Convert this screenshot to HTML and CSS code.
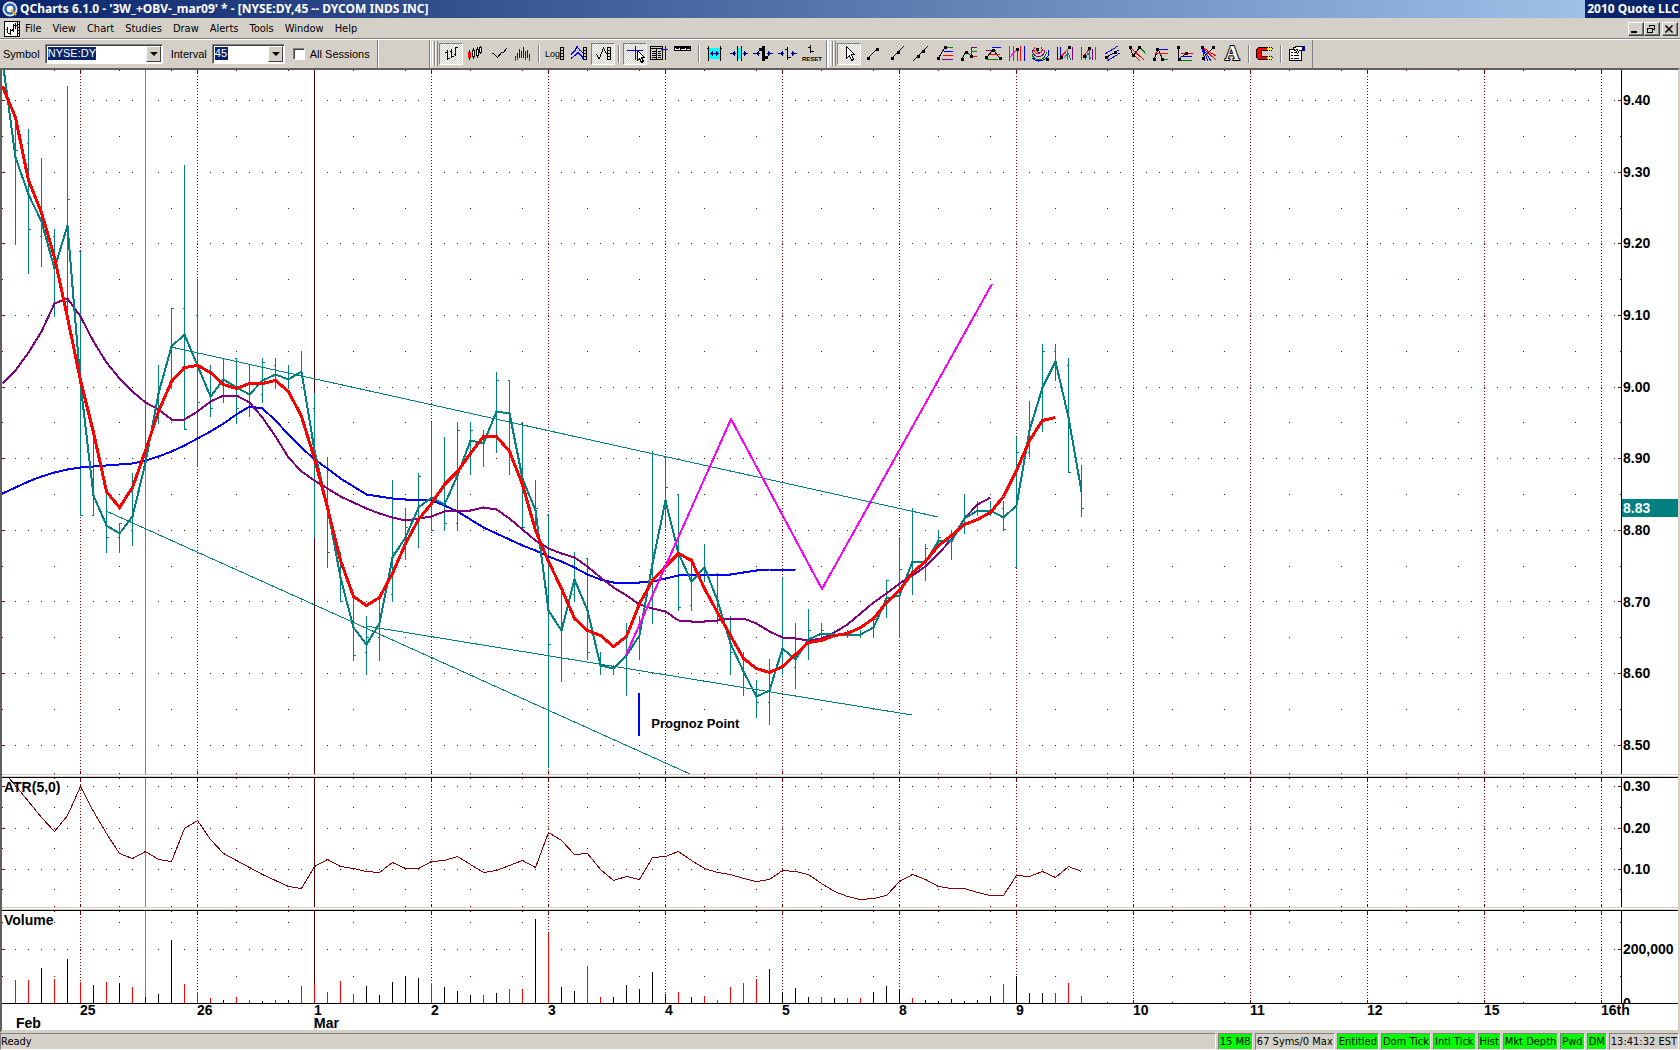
FILE: index.html
```html
<!DOCTYPE html>
<html lang="en">
<head>
    <meta charset="UTF-8">
    <meta name="viewport" content="width=device-width, initial-scale=1.0">
    <title>QCharts 6.1.0</title>
    <link rel="stylesheet" href="styles.css">
</head>
<body>
    <!-- Title bar -->
    <header class="title-bar">
        <svg class="app-icon" viewBox="0 0 16 16" width="16" height="16">
            <circle cx="8" cy="8" r="7.5" fill="#dfe8f4"/>
            <circle cx="8" cy="8" r="4.5" fill="#fff" stroke="#2f62b0" stroke-width="2.5"/>
            <path d="M9 9l5 5" stroke="#e0a020" stroke-width="2"/>
        </svg>
        <h1>QCharts 6.1.0 - '3W_+OBV-_mar09' * - [NYSE:DY,45 -- DYCOM INDS INC]</h1>
        <span class="title-owner">2010 Quote LLC</span>
    </header>

    <!-- Menu -->
    <nav class="menu-bar">
        <svg class="doc-icon" viewBox="0 0 16 16" width="16" height="16" shape-rendering="crispEdges">
            <rect width="16" height="16" fill="#000"/>
            <rect x="1" y="1" width="12" height="14" fill="#fff"/>
            <path d="M3.5 6v6M2 8.5h2M6.5 8v6M4 12.5h2M7 9.5h2M9.5 3v8M8 8.5h1M11.5 2v6M10 4.5h3" stroke="#000"/>
            <path d="M14.5 1v14" stroke="#fff" stroke-dasharray="2 1"/>
        </svg>
        <a href="#">File</a>
        <a href="#">View</a>
        <a href="#">Chart</a>
        <a href="#">Studies</a>
        <a href="#">Draw</a>
        <a href="#">Alerts</a>
        <a href="#">Tools</a>
        <a href="#">Window</a>
        <a href="#">Help</a>
        <div class="window-buttons">
            <button aria-label="Minimize"><svg viewBox="0 0 12 10" width="12" height="10" shape-rendering="crispEdges"><path d="M2 7h6v2H2z"/></svg></button>
            <button aria-label="Restore"><svg viewBox="0 0 12 10" width="12" height="10" shape-rendering="crispEdges"><path d="M4.5 3V1.5h5v4H8M4 1h6M2.5 4.5h5v4h-5zM2 4h6" fill="none" stroke="#000"/></svg></button>
            <button class="close" aria-label="Close"><svg viewBox="0 0 12 10" width="12" height="10"><path d="M2.500 1.500l7 7M9.500 1.500l-7 7" stroke="#000" stroke-width="1.500"/></svg></button>
        </div>
    </nav>

    <!-- Toolbars -->
    <div class="toolbars">
        <form class="symbol-bar">
            <label for="symbol">Symbol</label>
            <div class="combo">
                <select id="symbol" class="symbol-select"><option>NYSE:DY</option></select>
                <span class="combo-arrow"></span>
            </div>
            <label for="interval">Interval</label>
            <div class="combo">
                <select id="interval" class="interval-select"><option>45</option></select>
                <span class="combo-arrow"></span>
            </div>
            <input type="checkbox" id="sessions">
            <label for="sessions">All Sessions</label>
        </form>

        <div class="tool-bar">
            <button class="pressed" aria-label="Bars"><svg viewBox="0 0 24 21"><path d="M8.500 7v10M6 9.500h2M9 15.500h2M12.500 6v9M11 8.500h1M13 13.500h2M16.500 4v9M15 11.500h1M17 4.500h2"/></svg></button>
            <button aria-label="Candles"><svg viewBox="0 0 24 21"><path d="M6.500 7v10M10.500 5v11M14.500 4v11M17.500 3v8"/><path class="w" d="M9.500 7.500h2v6h-2zM13.500 6.500h2v6h-2zM16.500 4.500h2v5h-2z"/><rect x="5" y="9" width="3" height="6" fill="red"/></svg></button>
            <button aria-label="Line"><svg viewBox="0 0 24 21"><path d="M4.500 10.500h2l4 4 4-5h2l3-4"/></svg></button>
            <button aria-label="Histogram"><svg viewBox="0 0 24 21"><path class="b" d="M4.500 13v2M6.500 10v5M8.500 6v9M10.500 8v7M12.500 4v11M14.500 8v7M16.500 7v8M18.500 11v4"/><path class="r" d="M4.500 15v3M6.500 15v2M14.500 15v2M18.500 15v3"/></svg></button>
            <i></i>
            <button aria-label="Log scale"><svg viewBox="0 0 24 21"><text x="2" y="14" class="log">Log</text><path d="M17.500 4.500h3v12h-3zM18 7.500h2M18 10.500h2M18 13.500h2"/></svg></button>
            <button aria-label="Scale all"><svg viewBox="0 0 24 21"><path class="b" d="M4 11.500l4-4 2-4 3 4 3 2M4 15.500l4-3 3-3 4 4 1 2"/><path d="M16.500 4.500h3v12h-3zM17 7.500h2M17 10.500h2M17 13.500h2"/></svg></button>
            <button class="pressed" aria-label="Scale price"><svg viewBox="0 0 24 21"><path d="M5.500 11l2 4h1l4-10 3 6M19.500 4.500h-3v12h3zM17 7.500h2M17 10.500h2M17 13.500h2"/></svg></button>
            <i></i>
            <button class="pressed" aria-label="Crosshair"><svg viewBox="0 0 24 21"><path class="b" d="M4 7.500h16M12.500 3v14"/><path class="w" d="M14.500 7.500v10l2-2 2 4 2-1-2-4h3z"/></svg></button>
            <button aria-label="Data window"><svg viewBox="0 0 24 21"><path d="M3.500 3.500h12v13h-12zM3 5.500h13M5 8.500h4M5 10.500h4M5 12.500h4M5 14.500h4M11 8.500h3M11 10.500h3M11 12.500h3M11 14.500h3M9.500 6v10"/><path class="b" d="M18.500 3v14M14 6.500h7"/></svg></button>
            <button aria-label="Cursor line"><svg viewBox="0 0 24 21"><path class="w" d="M3.500 3.500h16v4h-16z"/><path d="M3 4.500h17M5 5.500h3M10 5.500h4M16 5.500h3M9.500 4v3M15.500 4v3"/></svg></button>
            <i></i>
            <button aria-label="Fit"><svg viewBox="0 0 24 21"><rect x="6" y="5" width="11" height="11" fill="#0ff"/><path d="M5.500 3v15M17.500 3v15M4 5.500h1M18 5.500h1"/><path class="n" d="M7 10.500h9M9.500 8v5M13.500 8v5M8.500 9v3M14.500 9v3"/></svg></button>
            <button aria-label="Compress"><svg viewBox="0 0 24 21"><rect x="11" y="5" width="3" height="11" fill="#0ff"/><path d="M10.500 3v15M14.500 3v15"/><path class="n" d="M3 10.500h6M16 10.500h5M7.500 8v5M17.500 8v5M6.500 9v3M18.500 9v3"/></svg></button>
            <button aria-label="Thicker"><svg viewBox="0 0 24 21"><path class="k" d="M11 3h3v15h-3zM8 5h3v3H8zM14 13h3v3h-3z"/><path class="n" d="M2 10.500h7M16 10.500h6M7.500 8v5M17.500 8v5M6.500 9v3M18.500 9v3"/></svg></button>
            <button aria-label="Thinner"><svg viewBox="0 0 24 21"><path d="M12.500 4v13M10 6.500h2M13 14.500h3"/><path class="n" d="M3 10.500h6M16 10.500h6M7.500 8v5M17.500 8v5M6.500 9v3M18.500 9v3"/></svg></button>
            <button aria-label="Reset"><svg viewBox="0 0 24 21"><path d="M11.500 2v8M9 4.500h2M12 8.500h3"/><text x="3" y="18" class="reset">RESET</text></svg></button>
        </div>

        <div class="tool-bar">
            <button class="pressed" aria-label="Select"><svg viewBox="0 0 24 21"><path class="w" d="M9.500 3.500v12l3-3 2 5 2-1-2-5h3z"/></svg></button>
            <button aria-label="Segment"><svg viewBox="0 0 24 21"><path d="M7 15l9-9"/><path class="s" d="M6 14h3v3H6zM15 5h3v3h-3z"/></svg></button>
            <button aria-label="Ray"><svg viewBox="0 0 24 21"><path d="M7 15l12-12"/><path class="s" d="M6 14h3v3H6zM12 8h3v3h-3z"/></svg></button>
            <button aria-label="Line"><svg viewBox="0 0 24 21"><path d="M4 18l15-15"/><path class="s" d="M8 12h3v3H8zM13 7h3v3h-3z"/></svg></button>
            <button aria-label="Retracement"><svg viewBox="0 0 24 21"><path d="M5 16l7-12"/><path class="g" d="M13 4.500h7"/><path class="b" d="M11 8.500h9"/><path class="r" d="M10 12.500h10"/><path class="p" d="M9 16.500h11"/><path class="s" d="M4 14h3v3H4zM11 3h3v3h-3z"/></svg></button>
            <button aria-label="Extension"><svg viewBox="0 0 24 21"><path d="M5 16l4-8 5 5"/><path class="p" d="M14.500 4v10M14 4.500h6"/><path class="g" d="M14 8.500h6"/><path class="r" d="M14 13.500h6"/><path class="s" d="M4 15h3v3H4zM8 8h3v3H8zM13 12h3v3h-3z"/></svg></button>
            <button aria-label="Projection"><svg viewBox="0 0 24 21"><path d="M5 15l7-8 7 8"/><path class="b" d="M11 4.500h9"/><path class="p" d="M5 7.500h10"/><path class="r" d="M8 11.500h11"/><path class="g" d="M5 16.500h12"/><path class="s" d="M11 6h3v3h-3zM4 13h3v3H4zM18 14h3v3h-3z"/></svg></button>
            <button aria-label="Time lines"><svg viewBox="0 0 24 21"><path class="t" d="M4.500 3v15M8.500 3v15"/><path class="m" d="M5 14l7-8"/><path class="r" d="M12.500 7v11M15.500 3v15"/><path class="b" d="M19.500 3v15"/><path class="s" d="M11 5h3v3h-3z"/></svg></button>
            <button aria-label="Arcs"><svg viewBox="0 0 24 21"><g class="arc"><path class="r" d="M6 4a4 4 0 1 0 6 0"/><path class="p" d="M3 7a6 6 0 0 0 13 0"/><path class="g" d="M3 11a7 7 0 0 0 14-3"/><path class="b" d="M3 15a10 10 0 0 0 17-8M8 8a2 2 0 0 0 3 1"/></g><path class="s" d="M7 5h3v3H7zM17 15h3v3h-3z"/></svg></button>
            <button aria-label="Cycles"><svg viewBox="0 0 24 21"><path class="b" d="M4.500 4v13M7.500 4v13"/><path class="r" d="M5 17l12-13"/><path class="t" d="M11 15l4-5 3 7M14.500 8v9"/><path class="p" d="M19.500 4v13"/><path class="s" d="M7 13h3v3H7zM15 3h3v3h-3z"/></svg></button>
            <button aria-label="Fan time"><svg viewBox="0 0 24 21"><path class="g" d="M4.500 4v13"/><path class="r" d="M7 13l6-8"/><path class="t" d="M8 17l3-7 3 6M12.500 6v11M18.500 4v13"/><path class="p" d="M15.500 6v11"/><path class="s" d="M6 12h3v3H6zM11 4h3v3h-3z"/></svg></button>
            <button aria-label="Channel"><svg viewBox="0 0 24 21"><path class="b" d="M4 11l13-8M6 18l13-8"/><path d="M4 15l14-8"/><path class="s" d="M4 13h3v3H4zM13 8h3v3h-3z"/></svg></button>
            <button aria-label="Pitchfork"><svg viewBox="0 0 24 21"><path class="r" d="M5 4l14 13M8 11l7 7"/><path d="M5 4l3 9 7-9"/><path class="g" d="M15 4l6 7"/><path class="s" d="M4 3h3v3H4zM13 3h3v3h-3zM7 11h3v3H7z"/></svg></button>
            <button aria-label="Levels"><svg viewBox="0 0 24 21"><path d="M5 17l4-11 5 11"/><path class="b" d="M10 6.500h9"/><path class="r" d="M6 10.500h13"/><path class="g" d="M13 16.500h6"/><path class="s" d="M7 5h3v3H7zM4 15h3v3H4zM12 15h3v3h-3z"/></svg></button>
            <button aria-label="Channel levels"><svg viewBox="0 0 24 21"><path d="M5.500 4v12l7-5"/><path class="r" d="M8 10.500h12"/><path class="b" d="M8 13.500h11"/><path class="g" d="M7 17.500h12"/><path class="s" d="M4 3h3v3H4zM12 9h3v3h-3zM5 15h3v3H5z"/></svg></button>
            <button aria-label="Fan"><svg viewBox="0 0 24 21"><path class="b" d="M5 4l3 14M5 4l9 14M5 4l6 14"/><path class="r" d="M5 4l14 13M5 4l14 9"/><path d="M6 15l11-11"/><path class="s" d="M4 3h3v3H4zM15 3h3v3h-3zM5 14h3v3H5z"/></svg></button>
            <button aria-label="Text"><svg viewBox="0 0 24 21"><text x="4" y="17" class="letter">A</text></svg></button>
            <i></i>
            <button aria-label="Magnet"><svg viewBox="0 0 24 21"><path class="k" d="M5 4h10v4H9v5h6v4H5l-2-2V6z"/><path d="M5 5h9v2H8v7h6v2H5l-1-2V7z" fill="red" stroke="none"/><path d="M14 5h5v2h-5zM14 14h5v2h-5z" fill="#ff0" stroke="none"/><path d="M14 4.500h5M14 7.500h5M14 13.500h5M14 16.500h5M19.500 5v2M19.500 14v2" stroke-dasharray="1 1"/></svg></button>
            <i></i>
            <button aria-label="Properties"><svg viewBox="0 0 24 21"><path class="w" d="M4.500 6.500h12v11h-12z"/><path d="M6 9.500h2M9 9.500h5M6 12.500h2M9 12.500h5M6 15.500h2M9 15.500h5"/><path class="w" d="M8.500 4.500l4-1h5v4h-3l-2 3-1-1 1-3-3 1z"/><path d="M17 3h3v5h-3z" fill="navy" stroke="none"/></svg></button>
        </div>
    </div>

    <!-- Chart window -->
    <main class="chart-window">
        <section class="panel price-panel">
            <div class="plot">
                <svg id="price" viewBox="2 70 1619 704" preserveAspectRatio="none"></svg>
                <span class="note">Prognoz Point</span>
            </div>
            <div class="scale">
                <span>9.40</span>
                <span>9.30</span>
                <span>9.20</span>
                <span>9.10</span>
                <span>9.00</span>
                <span>8.90</span>
                <span>8.80</span>
                <span>8.70</span>
                <span>8.60</span>
                <span>8.50</span>
                <strong class="last-price">8.83</strong>
            </div>
        </section>

        <section class="panel atr-panel">
            <div class="plot">
                <svg id="atr" viewBox="2 778 1619 129" preserveAspectRatio="none"></svg>
                <h2>ATR(5,0)</h2>
            </div>
            <div class="scale">
                <span>0.30</span>
                <span>0.20</span>
                <span>0.10</span>
            </div>
        </section>

        <section class="panel volume-panel">
            <div class="plot">
                <svg id="volume" viewBox="2 911 1619 92" preserveAspectRatio="none"></svg>
                <h2>Volume</h2>
            </div>
            <div class="scale">
                <span>200,000</span>
                <span>0</span>
            </div>
        </section>

        <div class="date-axis">
            <div class="month"><br>Feb</div>
            <div>25</div>
            <div>26</div>
            <div class="month-start">1<br>Mar</div>
            <div>2</div>
            <div>3</div>
            <div>4</div>
            <div>5</div>
            <div>8</div>
            <div>9</div>
            <div>10</div>
            <div>11</div>
            <div>12</div>
            <div>15</div>
            <div>16th</div>
        </div>
    </main>

    <!-- Status bar -->
    <footer class="status-bar">
        <span class="ready">Ready</span>
        <span class="on">15 MB</span>
        <span>67 Syms/0 Max</span>
        <span class="on">Entitled</span>
        <span class="on">Dom Tick</span>
        <span class="on">Intl Tick</span>
        <span class="on">Hist</span>
        <span class="on">Mkt Depth</span>
        <span class="on">Pwd</span>
        <span class="on">DM</span>
        <span>13:41:32 EST</span>
    </footer>

    <script src="script.js"></script>
</body>
</html>
```
FILE: styles.css
```css
* {
    box-sizing: border-box;
}

body {
    margin: 0;
    height: 100vh;
    display: flex;
    flex-direction: column;
    overflow: hidden;
    background-color: #d4d0c8;
    color: #000;
    font-family: "DejaVu Sans Condensed", "DejaVu Sans", sans-serif;
    font-size: 11px;
}

/* Title bar */
.title-bar {
    display: flex;
    align-items: center;
    height: 18px;
    padding-left: 2px;
    gap: 2px;
    background: linear-gradient(90deg, #0a246a, #a6caf0);
    color: #fff;
}

.title-bar h1,
.title-owner {
    margin: 0;
    font-family: "Noto Sans", sans-serif;
    font-size: 12px;
    font-weight: bold;
    line-height: 18px;
    white-space: nowrap;
}

.title-owner {
    margin-left: auto;
    padding: 0 1px 0 2px;
    background-color: #0a246a;
}

/* Menu */
.menu-bar {
    display: flex;
    align-items: center;
    height: 22px;
    padding-left: 4px;
    border-bottom: 1px solid #fff;
    box-shadow: inset 0 -1px #808080;
}

.menu-bar a {
    margin-left: 11px;
    color: #000;
    text-decoration: none;
}

.menu-bar .doc-icon + a {
    margin-left: 5px;
}

.window-buttons {
    display: flex;
    margin-left: auto;
    padding-right: 2px;
}

.window-buttons button {
    width: 16px;
    height: 14px;
    padding: 0;
    border: 1px solid;
    border-color: #fff #404040 #404040 #fff;
    box-shadow: inset -1px -1px #808080;
    background-color: #d4d0c8;
}

.window-buttons svg {
    display: block;
}

.window-buttons .close {
    margin-left: 2px;
}

/* Toolbars */
.toolbars {
    display: flex;
    align-items: stretch;
    height: 28px;
}

.symbol-bar {
    display: flex;
    align-items: center;
    width: 378px;
    padding-left: 3px;
    border-right: 1px solid #808080;
    box-shadow: 1px 0 #fff;
    margin-right: 51px;
    font-family: "Liberation Sans", Arial, sans-serif;
    font-size: 11px;
    white-space: nowrap;
}

.combo {
    position: relative;
    margin: 0 8px 0 5px;
}

.combo select {
    appearance: none;
    display: block;
    height: 20px;
    padding: 0 0 2px 2px;
    border: 1px solid;
    border-color: #808080 #fff #fff #808080;
    box-shadow: inset 1px 1px #404040;
    border-radius: 0;
    background: linear-gradient(#0a246a, #0a246a) 2px 2px / 48px 13px no-repeat #fff;
    color: #fff;
    font-family: "Liberation Sans", Arial, sans-serif;
    font-size: 11px;
}

.combo .symbol-select {
    width: 118px;
}

.combo .interval-select {
    width: 73px;
    background-size: 13px 13px;
}

.combo-arrow {
    position: absolute;
    top: 2px;
    right: 2px;
    width: 15px;
    height: 16px;
    border: 1px solid;
    border-color: #fff #404040 #404040 #fff;
    background-color: #d4d0c8;
    pointer-events: none;
}

.combo-arrow::after {
    content: "";
    display: block;
    margin: 5px 3px;
    border: 4px solid transparent;
    border-top-color: #000;
    border-bottom: 0;
    width: 0;
}

.symbol-bar input {
    appearance: none;
    width: 12px;
    height: 12px;
    margin: 0 5px 0 0;
    border: 1px solid;
    border-color: #808080 #fff #fff #808080;
    box-shadow: inset 1px 1px #404040;
    background-color: #fff;
}

.symbol-bar input:checked {
    background-color: #0a246a;
}

.tool-bar {
    display: flex;
    align-items: center;
    padding: 0 3px 1px 0;
    border-left: 1px solid #808080;
    border-right: 1px solid #808080;
    box-shadow: inset 1px 0 #fff;
}

.tool-bar + .tool-bar {
    border-left-color: #fff;
}

/* Gripper */
.tool-bar::before {
    content: "";
    width: 7px;
    height: 25px;
    margin: 0 0 0 2px;
    background: linear-gradient(90deg, #fff 1px, #d4d0c8 1px, #d4d0c8 2px, #808080 2px, #808080 3px, #fff 3px, #fff 4px, #d4d0c8 4px, #d4d0c8 5px, #808080 5px, #808080 6px, #d4d0c8 6px);
}

.tool-bar button {
    width: 24px;
    height: 22px;
    padding: 0;
    border: 1px solid transparent;
    background-color: transparent;
}

.tool-bar .pressed {
    border-color: #808080 #fff #fff #808080;
    background: repeating-conic-gradient(#fff 0 25%, #d4d0c8 0 50%) 0 0 / 2px 2px;
}

.tool-bar i {
    width: 2px;
    height: 18px;
    margin: 0 3px;
    border-left: 1px solid #808080;
    border-right: 1px solid #fff;
}

.tool-bar svg {
    display: block;
    width: 24px;
    height: 21px;
    margin: -1px;
    fill: none;
    stroke: #000;
    shape-rendering: crispEdges;
}

.tool-bar .w { fill: #fff; }
.tool-bar .s { fill: #000; stroke: none; }
.tool-bar .k { fill: #000; stroke: none; }
.tool-bar .r { stroke: #f00; }
.tool-bar .g { stroke: #008000; }
.tool-bar .b { stroke: #00f; }
.tool-bar .n { stroke: #000080; }
.tool-bar .p { stroke: #800080; }
.tool-bar .t { stroke: #008080; }
.tool-bar .m { stroke: #f0f; }

.tool-bar rect {
    stroke: none;
}

.tool-bar text {
    fill: #000;
    stroke: none;
    font-family: "Liberation Sans", Arial, sans-serif;
}

.tool-bar .log {
    font-size: 9px;
}

.tool-bar .reset {
    font-size: 6px;
    font-weight: bold;
}

.tool-bar .letter {
    fill: #fff;
    stroke: #000;
    stroke-width: 2px;
    paint-order: stroke;
    font-family: "Liberation Serif", serif;
    font-size: 20px;
    font-weight: bold;
}

/* Chart window */
.chart-window {
    flex: 1;
    min-height: 0;
    display: flex;
    flex-direction: column;
    border: solid;
    border-width: 2px 2px 3px 2px;
    border-color: #606060 #d4d0c8 #d4d0c8 #606060;
    background-color: #fff;
    font-family: "Liberation Sans", Arial, sans-serif;
    font-size: 14px;
    font-weight: bold;
}

.panel {
    display: flex;
    min-height: 0;
}

.price-panel {
    flex: 704 1 0;
}

.atr-panel {
    flex: 129 1 0;
}

.volume-panel {
    flex: 92 1 0;
}

/* Splitter above each study */
.atr-panel,
.volume-panel {
    border-top: 1px solid #000;
    margin-top: 3px;
    box-shadow: 0 -1px #d4d0c8, 0 -2px #fff, 0 -3px #d4d0c8;
}

.plot {
    position: relative;
    flex: 1;
    min-width: 0;
}

.plot svg {
    position: absolute;
    width: 100%;
    height: 100%;
    fill: none;
    shape-rendering: crispEdges;
}

.plot h2 {
    position: relative;
    margin: 0;
    padding: 1px 0 0 2px;
    font-size: 14px;
    line-height: 16px;
}

.note {
    position: absolute;
    left: 40.1%;
    top: 91.8%;
    font-size: 13px;
    line-height: 16px;
}

.scale {
    position: relative;
    width: 57px;
    display: flex;
    flex-direction: column;
    justify-content: space-between;
    padding-left: 1px;
    border-left: 1px solid #000;
    line-height: 16px;
    overflow: hidden;
}

.price-panel .scale {
    padding-top: 22px;
    padding-bottom: 21px;
}

.atr-panel .scale {
    padding-bottom: 30px;
}

.volume-panel .scale {
    padding-top: 30px;
}

.volume-panel .scale span:last-child {
    margin-bottom: -8px;
}

.last-price {
    position: absolute;
    top: 61%;
    left: 0;
    right: 0;
    padding-left: 1px;
    background-color: #008080;
    color: #fff;
    line-height: 18px;
}

.date-axis {
    display: grid;
    grid-template-columns: 78fr repeat(13, 117fr) minmax(0, 20fr);
    height: 27px;
    padding-right: 57px;
    border-top: 1px solid #000;
    line-height: 13px;
    white-space: nowrap;
}

.date-axis .month {
    padding-left: 14px;
}

.date-axis .month-start {
    background: linear-gradient(#c0c0c0, #c0c0c0) 0 13px / 1px 13px no-repeat;
}

/* Status bar */
.status-bar {
    display: flex;
    align-items: stretch;
    gap: 2px;
    height: 17px;
    padding-right: 1px;
    white-space: nowrap;
}

.status-bar span {
    padding: 0 1px;
    border: 1px solid;
    border-color: #808080 #fff #fff #808080;
    line-height: 15px;
}

.status-bar .ready {
    flex: 1;
    padding-left: 0;
}

.status-bar .on {
    background-color: #0f0;
}
```
FILE: script.js
```js
const NS = 'http://www.w3.org/2000/svg';
const FIRST_X = 2;
const BAR_STEP = 13;
const DAY_BARS = 9;
const RIGHT = 1621;

// [high, low, open, close] in chart units, 0 = no tick
const bars = [
    [117,244,0,150],[129,273,143,229],[158,266,236,0],[229,316,236,0],[86,309,301,199],[251,515,251,515],
    [428,515,515,0],[494,552,0,537],[523,552,537,523],[473,545,530,0],[400,458,0,0],[365,423,0,0],
    [308,388,0,308],[165,429,308,429],[279,466,315,402],[365,416,0,408],[358,402,0,0],[358,423,358,408],
    [365,416,0,407],[358,402,394,362],[358,388,365,0],[365,388,0,0],[351,376,0,0],[393,537,408,0],
    [457,567,0,552],[552,601,0,601],[596,660,0,655],[616,674,652,637],[597,660,637,0],[480,601,594,552],
    [508,559,0,527],[473,547,0,476],[422,530,0,530],[437,530,0,523],[422,530,523,430],[422,474,0,430],
    [430,466,0,0],[372,452,0,380],[380,474,380,0],[423,527,423,527],[480,530,0,508],[515,767,515,644],
    [587,681,0,0],[552,601,594,567],[558,659,558,652],[652,674,0,0],[665,674,0,0],[623,695,0,0],
    [616,659,0,0],[451,623,0,552],[457,527,457,487],[494,610,494,607],[558,610,605,0],[544,581,0,0],
    [573,623,0,0],[616,674,0,652],[652,695,0,0],[680,717,0,702],[659,724,702,0],[577,674,0,0],
    [623,688,667,0],[609,659,0,630],[623,637,0,630],[630,637,0,0],[630,637,0,0],[630,637,0,0],
    [616,637,0,619],[580,617,0,580],[537,637,0,569],[508,594,0,0],[544,580,0,548],[530,547,0,537],
    [530,559,0,0],[494,533,0,515],[501,515,0,0],[501,515,0,0],[501,529,508,529],[437,567,567,452],
    [401,456,452,422],[344,431,0,351],[344,380,351,0],[358,472,365,472],[465,516,0,508]
];

const fast = [60,157,194,221,268,225,383,495,525,533,516,462,393,346,334,365,396,379,387,394,380,374,379,371,450,
    507,577,627,644,623,557,537,507,497,504,475,440,443,411,413,478,510,610,630,579,610,665,668,655,635,
    563,500,553,581,567,600,643,671,696,690,648,659,639,633,634,634,634,627,598,595,561,562,540,541,518,
    510,510,517,505,430,387,361,417,491];
const slow = [86,117,180,212,257,317,380,432,491,507,487,450,411,381,367,365,372,384,388,383,383,380,391,416,458,
    507,560,596,605,597,573,543,519,503,484,471,453,436,436,451,484,530,561,588,618,630,635,646,636,603,
    580,566,553,560,588,612,635,658,668,672,666,654,642,640,635,633,627,618,602,590,572,561,545,535,524,
    519,512,496,470,440,420,417];
const middle = [383,370,352,331,303,298,316,341,362,378,391,402,409,419,419,411,401,395,395,402,417,436,457,471,480,
    488,496,502,508,513,517,520,518,516,511,510,510,507,509,518,529,540,548,553,557,566,577,587,595,604,
    608,611,620,621,621,620,618,618,623,631,637,638,640,638,632,624,613,602,593,583,575,566,553,539,518,
    504,497];
const long = [493,487,481,476,472,469,467,466,465,464,463,460,456,451,445,438,431,423,414,406,408,420,434,447,459,
    468,478,486,494,496,498,499,499,500,505,511,519,527,533,539,545,550,556,561,567,574,579,582,582,582,
    581,578,575,574,574,574,574,572,570,569,569,570];

const atr = [770,785,801,817,831,815,786,811,833,853,858,851,859,861,828,820,839,853,860,867,874,880,886,888,866,
    859,866,868,871,872,862,868,868,861,860,856,864,872,870,865,860,867,832,840,854,853,869,880,876,879,
    857,856,851,860,868,872,874,878,881,879,870,871,874,883,891,896,899,898,895,881,874,879,886,888,888,
    892,895,895,875,876,871,877,866,871];

// negative = down bar (red)
const volume = [-23,-23,35,-24,44,-21,18,-21,20,-16,6,9,63,-19,-11,-5,3,-6,-3,2,-3,3,-17,-19,
    -11,-22,-9,17,8,21,27,25,-20,16,12,8,-8,10,-14,-14,84,-71,16,12,-37,-6,6,18,14,
    31,9,-11,6,-7,-3,-16,-20,-24,34,11,15,6,-6,5,-5,-5,11,17,13,-5,3,2,4,2,
    3,7,-19,27,10,10,-10,-20,-7];

function barX(i) {
    return FIRST_X + i * BAR_STEP;
}

function path(svg, d, color, width, dash) {
    const el = document.createElementNS(NS, 'path');
    el.setAttribute('d', d);
    el.setAttribute('stroke', color);
    el.setAttribute('stroke-width', width);
    if (dash) el.setAttribute('stroke-dasharray', dash);
    svg.appendChild(el);
}

function series(svg, values, color, width) {
    const d = values.map((y, i) => (i ? 'L' : 'M') + (barX(i) + 0.5) + ' ' + (y + 0.5)).join('');
    path(svg, d, color, width);
}

function grid(svg, top, bottom, major, minor) {
    let dots = '';
    let days = '';
    for (let i = 1; barX(i) < RIGHT; i++) {
        const x = barX(i);
        major.forEach(y => dots += `M${x} ${y + 0.5}h1`);
        const slot = (i + 3) % DAY_BARS;
        if (slot === 0) {
            days += `M${x + 0.5} ${top}V${bottom}`;
            dots += `M${x + 0.5} ${top}v3M${x + 0.5} ${bottom}v-3`;
        }
        if (slot === 3 || slot === 7) {
            [top, bottom - 1, ...minor].forEach(y => dots += `M${x} ${y + 0.5}h1`);
        }
    }
    major.forEach(y => dots += `M2 ${y + 0.5}h3M${RIGHT - 3} ${y + 0.5}h3`);
    minor.forEach(y => dots += `M2 ${y + 0.5}h1M${RIGHT - 1} ${y + 0.5}h1`);
    path(svg, days, '#800000', 1, '1 2');
    path(svg, dots, '#800000', 1);
    path(svg, `M314.5 ${top}V${bottom}`, '#500000', 1);
    path(svg, `M145.5 ${top}V${bottom}`, '#808080', 1);
}

function drawPrice() {
    const svg = document.getElementById('price');
    const major = [100, 172, 243, 315, 387, 458, 530, 601, 673, 745];
    const minor = [136, 208, 279, 351, 422, 494, 566, 637, 709];
    grid(svg, 70, 774, major, minor);

    let d = '';
    bars.forEach(([high, low, open, close], n) => {
        const x = barX(n + 1);
        d += `M${x + 0.5} ${high}V${low + 1}`;
        if (open) d += `M${x - 1} ${open + 0.5}h1`;
        if (close) d += `M${x + 1} ${close + 0.5}h2`;
    });
    path(svg, d, '#008080', 1);

    // trend lines
    path(svg, 'M171 347L938 517M106 511L690 774M366 626L912 715', '#008080', 1);

    series(svg, long, '#0000ff', 2);
    series(svg, middle, '#800080', 2);
    series(svg, fast, '#008080', 2);
    series(svg, slow, '#ff0000', 3);

    // forecast
    path(svg, 'M626 655L731 419L822 589L992 284', '#ff00ff', 2);
    path(svg, 'M639 693V736', '#0000ff', 2);
}

function drawAtr() {
    const svg = document.getElementById('atr');
    grid(svg, 778, 907, [786, 828, 869], [807, 848, 889]);
    series(svg, atr, '#800000', 1);
}

function drawVolume() {
    const svg = document.getElementById('volume');
    grid(svg, 911, 1003, [949], [922, 976]);
    let up = '';
    let down = '';
    volume.forEach((v, n) => {
        const line = `M${barX(n + 1) + 0.5} 1003v${-Math.abs(v)}`;
        if (v < 0) down += line;
        else up += line;
    });
    path(svg, up, '#000', 1);
    path(svg, down, '#f00', 1);
}

drawPrice();
drawAtr();
drawVolume();
```
